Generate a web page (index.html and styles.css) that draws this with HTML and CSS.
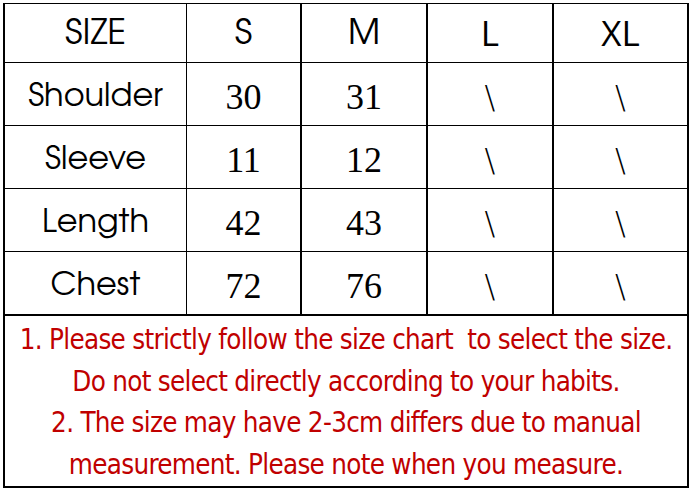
FILE: index.html
```html
<!DOCTYPE html>
<html>
<head>
<meta charset="utf-8">
<link rel="stylesheet" href="styles.css">
</head>
<body>
<div class="wrap">
<table class="chart">
  <colgroup>
    <col class="c1"><col class="c2"><col class="c3"><col class="c4"><col class="c5">
  </colgroup>
  <tr class="head">
    <td class="lab big">SIZE</td><td class="lab big">S</td><td class="lab big">M</td><td class="alt">L</td><td class="alt">XL</td>
  </tr>
  <tr>
    <td class="lab">Shoulder</td><td class="num">30</td><td class="num">31</td><td class="sl">\</td><td class="sl">\</td>
  </tr>
  <tr>
    <td class="lab">Sleeve</td><td class="num">11</td><td class="num">12</td><td class="sl">\</td><td class="sl">\</td>
  </tr>
  <tr>
    <td class="lab">Length</td><td class="num">42</td><td class="num">43</td><td class="sl">\</td><td class="sl">\</td>
  </tr>
  <tr class="last">
    <td class="lab">Chest</td><td class="num">72</td><td class="num">76</td><td class="sl">\</td><td class="sl">\</td>
  </tr>
  <tr class="note">
    <td colspan="5">
      <p>1. Please strictly follow the size chart&nbsp; to select the size.</p>
      <p>Do not select directly according to your habits.</p>
      <p>2. The size may have 2-3cm differs due to manual</p>
      <p>measurement. Please note when you measure.</p>
    </td>
  </tr>
</table>
</div>
</body>
</html>
```
FILE: styles.css
```css
html, body {
  margin: 0;
  padding: 0;
  background: #fff;
}
.wrap {
  padding: 3px 0 0 3px;
}
.chart {
  border-collapse: separate;
  border-spacing: 0;
  table-layout: fixed;
  width: 686px;
  border-left: 2px solid #000;
  border-top: 1px solid #000;
  border-right: 2px solid #000;
  border-bottom: 2px solid #000;
  color: #000;
}
.c1 { width: 181px; }
.c2 { width: 114px; }
.c3 { width: 126px; }
.c4 { width: 126px; }
.c5 { width: 135px; }
.chart td {
  padding: 5px 0 0;
  text-align: center;
  vertical-align: middle;
  border-bottom: 1px solid #000;
  height: 57px;
  line-height: 40px;
}
.chart tr.head td { height: 55px; padding-top: 3px; }
.chart td + td { border-left: 2px solid #000; }
.chart tr td:nth-child(2) { border-left-width: 1px; }
.chart tr.last td { border-bottom: 2px solid #000; }
.lab {
  font-family: "URW Gothic", "TeX Gyre Adventor", "Century Gothic", "Lato", sans-serif;
  font-size: 32px;
  font-weight: 400;
}
.lab.big {
  font-size: 35px;
}
.num {
  font-family: "Liberation Serif", serif;
  font-size: 36px;
}
.alt {
  font-family: "Open Sans", sans-serif;
  font-size: 35px;
}
.chart tr.head td.alt { padding-top: 0; }
.sl {
  font-family: "DejaVu Sans", sans-serif;
  font-weight: 200;
  font-size: 32px;
}
.chart tr.note td {
  border: 0;
  height: auto;
  padding: 3px 0 1px;
}
.note p {
  margin: 0;
  line-height: 41.5px;
  color: #c00000;
  font-family: "DejaVu Sans Condensed", sans-serif;
  font-size: 27.5px;
  letter-spacing: -0.7px;
  white-space: nowrap;
}
```
